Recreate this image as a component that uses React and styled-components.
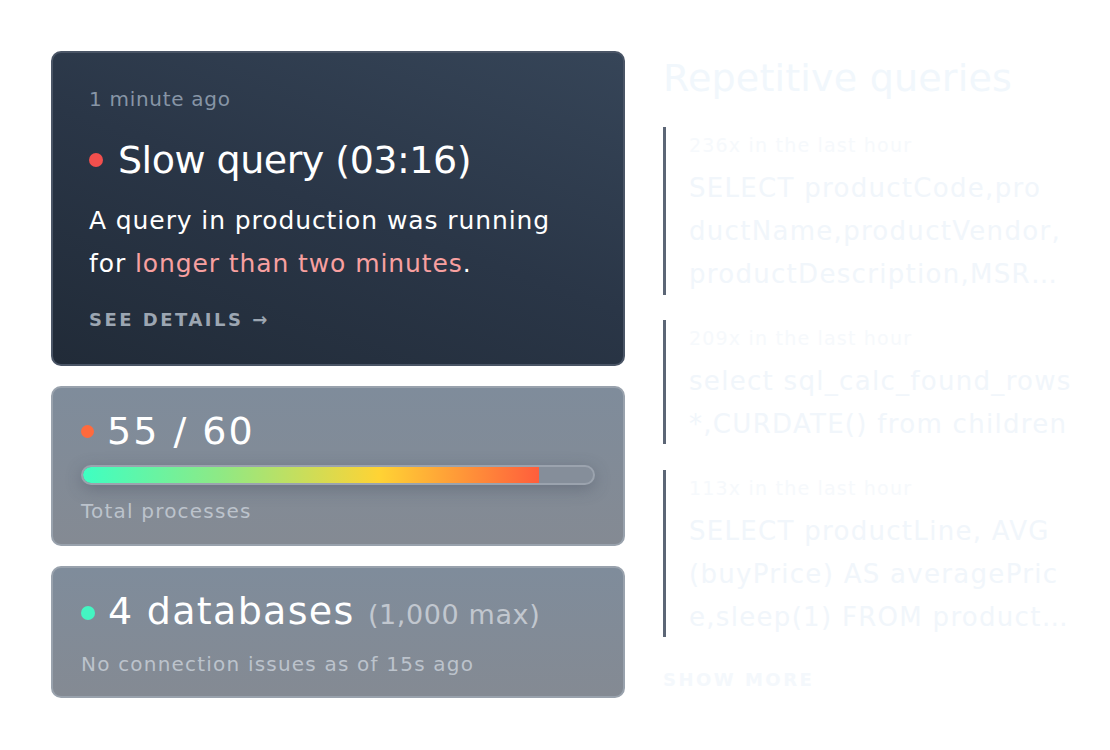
import React from 'react';
import styled, { createGlobalStyle } from 'styled-components';

const GlobalStyle = createGlobalStyle`
  html, body {
    margin: 0;
    padding: 0;
    background: #ffffff;
    font-family: "DejaVu Sans", Inter, sans-serif;
  }
`;

const Page = styled.div`
  width: 1110px;
  height: 750px;
  box-sizing: border-box;
  padding: 51px 0 0 51px;
  display: flex;
  gap: 38px;
`;

const LeftColumn = styled.div`
  width: 574px;
  display: flex;
  flex-direction: column;
  gap: 20px;
`;

const Card = styled.div`
  box-sizing: border-box;
  height: ${p => p.$h}px;
  border-radius: 10px;
  border: 2px solid ${p => (p.$dark ? '#4a5566' : '#99a2ad')};
  background: ${p =>
    p.$dark
      ? 'linear-gradient(200deg, #364558 0%, #2a3647 50%, #212b38 100%)'
      : 'linear-gradient(180deg, #7f8c9b 0%, #848a93 100%)'};
  padding: ${p => p.$pad};
  color: #ffffff;
`;

const TimeAgo = styled.div`
  font-size: 20px;
  line-height: 24px;
  letter-spacing: 0.7px;
  color: #8795a6;
`;

const TitleRow = styled.div`
  display: flex;
  align-items: center;
  gap: ${p => p.$gap || '15px'};
  margin-top: ${p => p.$mt || '0'};
`;

const Dot = styled.span`
  width: ${p => p.$size}px;
  height: ${p => p.$size}px;
  border-radius: 50%;
  background: ${p => p.$color};
  flex-shrink: 0;
`;

const BigTitle = styled.div`
  font-size: 38px;
  line-height: 46px;
  letter-spacing: ${p => p.$ls || '-0.5px'};
  color: #ffffff;
  white-space: nowrap;
`;

const Muted = styled.span`
  font-size: 27px;
  letter-spacing: 0.6px;
  color: #c1c7cf;
`;

const Body = styled.p`
  margin: 16px 0 0;
  font-size: 25px;
  line-height: 43px;
  letter-spacing: 0.9px;
  color: #ffffff;
`;

const Highlight = styled.span`
  color: #f8a0a0;
`;

const DetailsLink = styled.div`
  margin-top: 24px;
  font-size: 18px;
  font-weight: 700;
  letter-spacing: 2.5px;
  color: #9ca6b2;
`;

const Track = styled.div`
  margin-top: 11px;
  height: 20px;
  box-sizing: border-box;
  border-radius: 10px;
  border: 2px solid #9ba3ae;
  background: #858e9a;
  overflow: hidden;
  box-shadow: 0 4px 16px rgba(60, 70, 85, 0.35);
`;

const Fill = styled.div`
  height: 100%;
  border-radius: 8px 0 0 8px;
  background: linear-gradient(90deg, #3effc2 0%, #8ee985 30%, #ffd334 65%, #ff5e3c 100%);
`;

const Caption = styled.div`
  margin-top: ${p => p.$mt};
  font-size: 20px;
  line-height: 24px;
  letter-spacing: 1.2px;
  color: #bcc3cc;
`;

const RightColumn = styled.div`
  width: 420px;
  display: flex;
  flex-direction: column;
`;

const Heading = styled.h2`
  margin: 4px 0 0;
  font-size: 38px;
  font-weight: 400;
  line-height: 46px;
  letter-spacing: 0.2px;
  color: #f1f7fc;
`;

const QueryBlock = styled.div`
  margin-top: ${p => p.$mt};
  border-left: 3px solid #5c6676;
  padding: 6px 0 0 23px;
  height: ${p => p.$h}px;
  box-sizing: border-box;
`;

const QueryMeta = styled.div`
  font-size: 19px;
  line-height: 24px;
  letter-spacing: 1.2px;
  color: #f6f9fc;
`;

const QueryLines = styled.div`
  margin-top: 10px;
  font-size: 26px;
  line-height: 43px;
  letter-spacing: 1.3px;
  color: #f1f6fb;
  white-space: nowrap;
`;

const ShowMore = styled.div`
  margin-top: 32px;
  font-size: 18px;
  font-weight: 700;
  letter-spacing: 2.5px;
  color: #f4f8fc;
`;

const queries = [
  {
    meta: '236x in the last hour',
    lines: ['SELECT productCode,pro', 'ductName,productVendor,', 'productDescription,MSR…'],
    h: 168,
    mt: '26px',
  },
  {
    meta: '209x in the last hour',
    lines: ['select sql_calc_found_rows', '*,CURDATE() from children'],
    h: 124,
    mt: '25px',
  },
  {
    meta: '113x in the last hour',
    lines: ['SELECT productLine, AVG', '(buyPrice) AS averagePric', 'e,sleep(1) FROM product…'],
    h: 167,
    mt: '26px',
  },
];

const App = () => {
  return (
    <>
      <GlobalStyle />
      <Page>
        <LeftColumn>
          <Card $dark $h={315} $pad="34px 36px 0 36px">
            <TimeAgo>1 minute ago</TimeAgo>
            <TitleRow $mt="26px">
              <Dot $size={14} $color="#f24f4d" />
              <BigTitle>Slow query (03:16)</BigTitle>
            </TitleRow>
            <Body>
              A query in production was running
              <br />
              for <Highlight>longer than two minutes</Highlight>.
            </Body>
            <DetailsLink>SEE DETAILS →</DetailsLink>
          </Card>

          <Card $h={160} $pad="20px 28px 0 28px">
            <TitleRow $gap="13px">
              <Dot $size={13} $color="#ff6a3d" />
              <BigTitle $ls="2px">55 / 60</BigTitle>
            </TitleRow>
            <Track>
              <Fill style={{ width: `${(55 / 60) * 97.5}%` }} />
            </Track>
            <Caption $mt="14px">Total processes</Caption>
          </Card>

          <Card $h={132} $pad="20px 28px 0 28px">
            <TitleRow $gap="13px">
              <Dot $size={14} $color="#44f5c2" />
              <BigTitle $ls="1.3px">
                4 databases <Muted>(1,000 max)</Muted>
              </BigTitle>
            </TitleRow>
            <Caption $mt="14px">No connection issues as of 15s ago</Caption>
          </Card>
        </LeftColumn>

        <RightColumn>
          <Heading>Repetitive queries</Heading>
          {queries.map(q => (
            <QueryBlock key={q.meta} $h={q.h} $mt={q.mt}>
              <QueryMeta>{q.meta}</QueryMeta>
              <QueryLines>
                {q.lines.map(line => (
                  <div key={line}>{line}</div>
                ))}
              </QueryLines>
            </QueryBlock>
          ))}
          <ShowMore>SHOW MORE</ShowMore>
        </RightColumn>
      </Page>
    </>
  );
};

export default App;
